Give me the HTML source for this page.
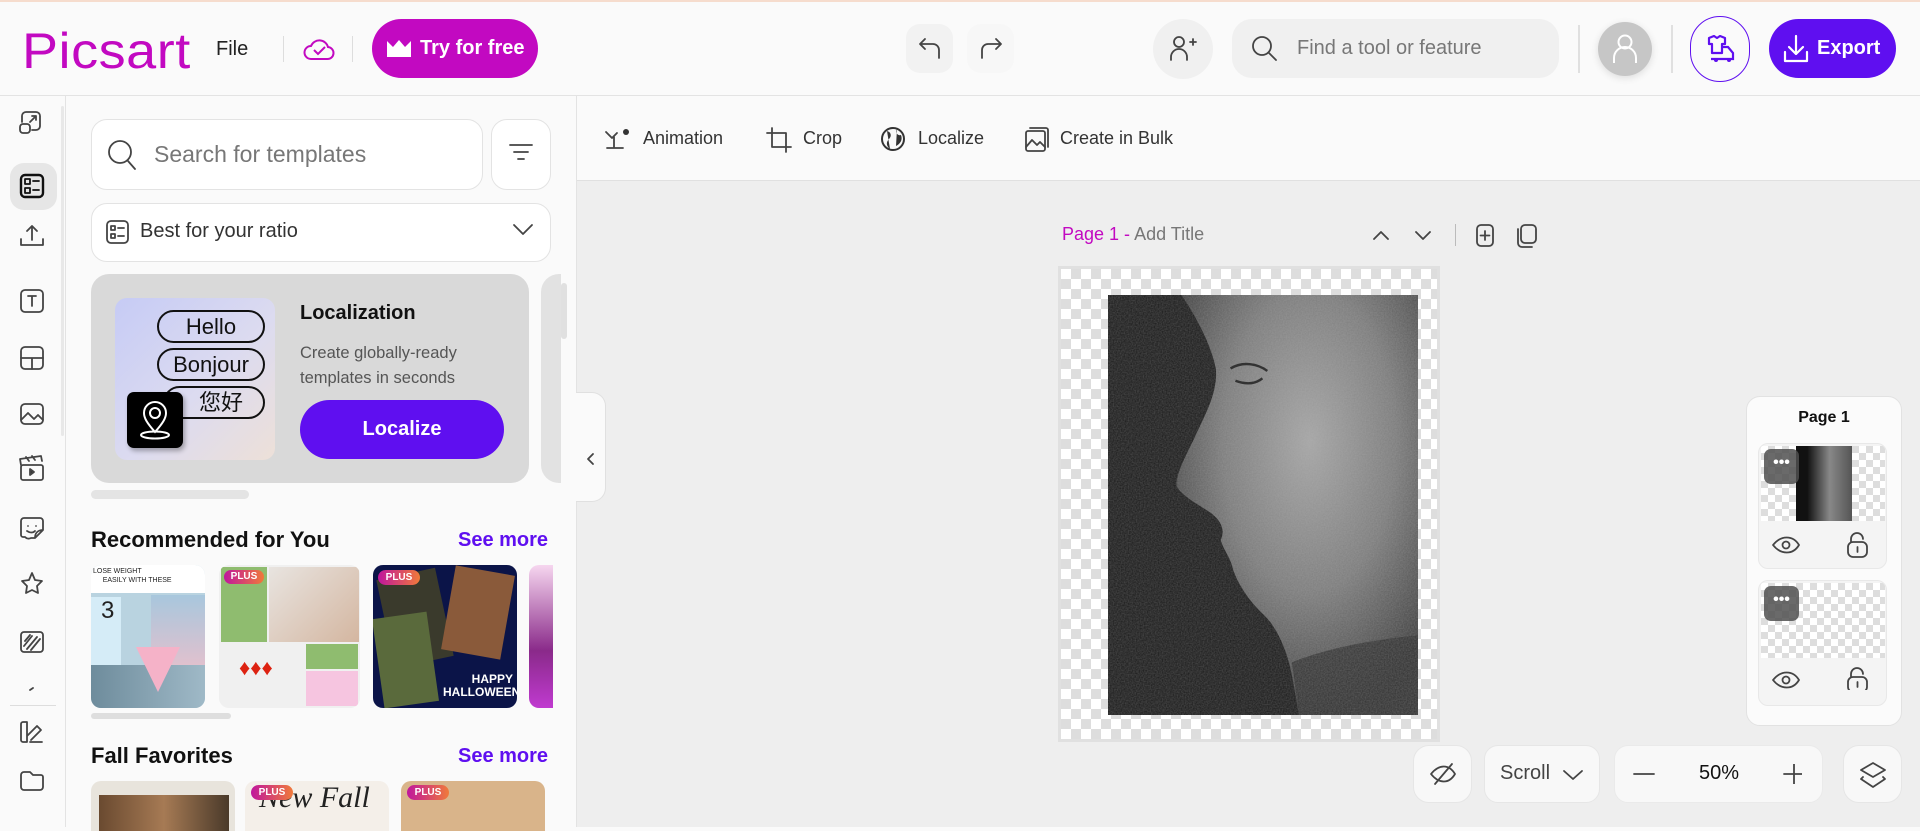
<!DOCTYPE html>
<html><head><meta charset="utf-8">
<style>
*{box-sizing:border-box;margin:0;padding:0}
body{width:1920px;height:827px;overflow:hidden;background:#fafafa;font-family:"Liberation Sans","Noto Sans CJK SC",sans-serif;color:#222;position:relative}
.a{position:absolute}
svg{display:block}
.ic{fill:none;stroke:#444;stroke-width:1.8;stroke-linecap:round;stroke-linejoin:round}
.btn{background:#f7f7f7;border:1px solid #e6e6e6;border-radius:14px}
.chk{background-color:#fff;background-image:linear-gradient(45deg,#ddd 25%,transparent 25%,transparent 75%,#ddd 75%),linear-gradient(45deg,#ddd 25%,transparent 25%,transparent 75%,#ddd 75%);background-size:20px 20px;background-position:0 0,10px 10px}
.chk2{background-size:14px 14px;background-position:0 0,7px 7px}
</style></head><body>
<div class="a" style="left:0;top:0;width:1920px;height:2px;background:#f6dccd"></div>
<!-- header -->
<div class="a" style="left:0;top:95px;width:1920px;height:1px;background:#e3e3e3"></div>
<div class="a" style="left:22px;top:22px;font-size:50px;font-weight:400;color:#c209c1;letter-spacing:0.5px;transform:scaleX(1.08);transform-origin:left">Picsart</div>
<div class="a" style="left:216px;top:38px;font-size:20px;color:#222">File</div>
<div class="a" style="left:283px;top:36px;width:1px;height:26px;background:#ddd"></div>
<svg class="a" style="left:302px;top:34px" width="34" height="30" viewBox="0 0 34 30"><path d="M9 25h16a6 6 0 0 0 1-12 9 9 0 0 0-17-1 6.5 6.5 0 0 0 0 13z" fill="none" stroke="#c209c1" stroke-width="2"/><path d="M12 16l4 4 7-7" fill="none" stroke="#c209c1" stroke-width="2"/></svg>
<div class="a" style="left:352px;top:36px;width:1px;height:26px;background:#ddd"></div>
<div class="a" style="left:372px;top:19px;width:166px;height:59px;border-radius:30px;background:#c209c1;color:#fff;font-size:20px;font-weight:700;line-height:59px;padding-left:48px">Try for free</div>
<svg class="a" style="left:386px;top:39px" width="26" height="20" viewBox="0 0 26 20"><path d="M1 2l6 6 6-7 6 7 6-6v16H1z" fill="#fff"/></svg>
<div class="a" style="left:906px;top:24px;width:47px;height:49px;border-radius:14px;background:#f2f2f2"></div>
<svg class="a" style="left:917px;top:36px" width="26" height="24" viewBox="0 0 26 24"><path d="M8 3L3 8l5 5M3 8h13a6 6 0 0 1 6 6v8" class="ic" stroke="#333"/></svg>
<div class="a" style="left:967px;top:24px;width:47px;height:49px;border-radius:14px;background:#f7f7f7"></div>
<svg class="a" style="left:978px;top:36px" width="26" height="24" viewBox="0 0 26 24"><path d="M18 3l5 5-5 5M23 8H10a6 6 0 0 0-6 6v8" class="ic" stroke="#bbb"/></svg>
<div class="a" style="left:1153px;top:19px;width:60px;height:60px;border-radius:30px;background:#f0f0f0"></div>
<svg class="a" style="left:1168px;top:33px" width="30" height="30" viewBox="0 0 30 30"><circle cx="11" cy="9" r="5" class="ic" stroke="#222"/><path d="M3 27v-3a8 8 0 0 1 16 0v3M22 9h6M25 6v6" class="ic" stroke="#222"/></svg>
<div class="a" style="left:1232px;top:19px;width:327px;height:59px;border-radius:20px;background:#f0f0f0"></div>
<svg class="a" style="left:1250px;top:34px" width="30" height="30" viewBox="0 0 30 30"><circle cx="12" cy="12" r="9" class="ic" stroke="#333"/><path d="M19 19l7 7" class="ic" stroke="#333"/></svg>
<div class="a" style="left:1297px;top:37px;font-size:20px;color:#777">Find a tool or feature</div>
<div class="a" style="left:1578px;top:25px;width:2px;height:48px;background:#e0e0e0"></div>
<div class="a" style="left:1598px;top:22px;width:54px;height:54px;border-radius:27px;background:#c6c6c6;box-shadow:0 2px 8px rgba(0,0,0,.12)"></div>
<svg class="a" style="left:1611px;top:32px" width="28" height="32" viewBox="0 0 28 32"><circle cx="14" cy="10" r="6.5" fill="none" stroke="#fff" stroke-width="2"/><path d="M3 31v-5a11 11 0 0 1 22 0v5" fill="none" stroke="#fff" stroke-width="2"/></svg>
<div class="a" style="left:1671px;top:25px;width:2px;height:48px;background:#e0e0e0"></div>
<div class="a" style="left:1690px;top:16px;width:60px;height:66px;border-radius:30px;border:1.5px solid #5f0ff0"></div>
<svg class="a" style="left:1705px;top:35px" width="32" height="28" viewBox="0 0 32 28"><path d="M4 3l5-2 3 2 3-2 5 2v6h-3v9H7V9H4z" fill="none" stroke="#5f0ff0" stroke-width="2.2" stroke-linejoin="round"/><path d="M17 12h6l5 6v6H6" fill="none" stroke="#5f0ff0" stroke-width="2.2"/><circle cx="11" cy="25" r="2" fill="#5f0ff0"/><circle cx="24" cy="25" r="2" fill="#5f0ff0"/></svg>
<div class="a" style="left:1769px;top:19px;width:127px;height:59px;border-radius:30px;background:#5f0ff0;color:#fff;font-size:20px;font-weight:700;line-height:59px;padding-left:48px">Export</div>
<svg class="a" style="left:1782px;top:34px" width="28" height="30" viewBox="0 0 28 30"><path d="M14 2v18M7 13l7 7 7-7M3 18v9h22v-9" fill="none" stroke="#fff" stroke-width="2.2" stroke-linecap="round" stroke-linejoin="round"/></svg>

<!-- left rail -->
<div class="a" style="left:65px;top:96px;width:1px;height:731px;background:#e3e3e3"></div>
<div class="a" style="left:10px;top:163px;width:47px;height:47px;border-radius:14px;background:#e6e6e6"></div>
<svg class="a" style="left:0;top:96px" width="65" height="731" viewBox="0 0 65 731">
<g class="ic" stroke="#333">
<path d="M22 26v-6a4 4 0 0 1 4-4h10a4 4 0 0 1 4 4v10a4 4 0 0 1-4 4h-4"/><rect x="20" y="28" width="10" height="9" rx="3"/><path d="M30 26l6-6M32 20h4v4"/>
<rect x="21" y="79" width="22" height="22" rx="4" stroke-width="2.4" stroke="#111"/><rect x="25" y="83" width="5" height="5" stroke="#111"/><rect x="25" y="92" width="5" height="5" stroke="#111"/><path d="M33 85h6M33 94h6" stroke="#111"/>
<path d="M21 143v6h22v-6M32 130v14M27 135l5-5 5 5"/>
<rect x="21" y="194" width="22" height="22" rx="4"/><path d="M28 200h8M32 200v10"/>
<rect x="21" y="251" width="22" height="22" rx="4"/><path d="M21 262h22M32 262v11"/>
<rect x="21" y="308" width="22" height="20" rx="4"/><path d="M21 324l7-7 6 6 4-4 5 5"/>
<rect x="21" y="369" width="22" height="15" rx="2"/><path d="M21 369l-1-6 21-3 1 5M26 361l3 4M32 360l3 4"/><path d="M30 373l4 3-4 3z" fill="#333"/>
<path d="M25 441h-2a2 2 0 0 1-2-2v-14a3 3 0 0 1 3-3h16a3 3 0 0 1 3 3v9l-8 8h-4a5 5 0 0 1-6-1zM35 442c0-5 3-8 8-8M28 430h.01M36 430h.01M27 435c3 2 6 2 8 0"/>
<path d="M32 477l3 7 7 1-5 5 1 7-6-3-6 3 1-7-5-5 7-1z"/>
<rect x="21" y="536" width="22" height="20" rx="3"/><path d="M24 550l8-10M27 553l10-12M31 554l9-11M25 545l5-6"/>
<path d="M30 594l3-2"/>
</g>
<rect x="10" y="609" width="46" height="1" fill="#ddd"/>
<g class="ic" stroke="#333"><path d="M21 644v-16a2 2 0 0 1 2-2h4v20h-4a2 2 0 0 1-2-2zM27 640l10-10 4 4-10 10M30 646h12"/><path d="M21 689v-10a3 3 0 0 1 3-3h6l3 3h8a2 2 0 0 1 2 2v10a3 3 0 0 1-3 3H24a3 3 0 0 1-3-3z"/></g>
<rect x="61" y="10" width="3" height="330" rx="1.5" fill="#e8e8e8"/>
</svg>

<!-- panel -->
<div class="a" style="left:576px;top:96px;width:1px;height:731px;background:#e3e3e3"></div>
<div class="a" style="left:91px;top:119px;width:392px;height:71px;border:1px solid #e3e3e3;border-radius:16px;background:#fff"></div>
<svg class="a" style="left:105px;top:137px" width="36" height="36" viewBox="0 0 36 36"><circle cx="15" cy="15" r="11" class="ic" stroke="#333" stroke-width="2"/><path d="M23 24l7 8" class="ic" stroke="#333" stroke-width="2"/></svg>
<div class="a" style="left:154px;top:141px;font-size:23px;color:#777">Search for templates</div>
<div class="a" style="left:491px;top:119px;width:60px;height:71px;border:1px solid #e3e3e3;border-radius:16px;background:#fff"></div>
<svg class="a" style="left:508px;top:140px" width="26" height="26" viewBox="0 0 26 26"><path d="M2 5h22M6 12h14M10 19h6" class="ic" stroke="#444"/></svg>
<div class="a" style="left:91px;top:203px;width:460px;height:59px;border:1px solid #e3e3e3;border-radius:16px;background:#fff"></div>
<svg class="a" style="left:105px;top:219px" width="26" height="26" viewBox="0 0 26 26"><rect x="2" y="2" width="21" height="22" rx="4" class="ic" stroke="#444"/><rect x="6" y="7" width="4" height="4" class="ic" stroke="#444" stroke-width="1.4"/><rect x="6" y="15" width="4" height="4" class="ic" stroke="#444" stroke-width="1.4"/><path d="M13 9h6M13 17h6" class="ic" stroke="#444"/></svg>
<div class="a" style="left:140px;top:220px;font-size:20px;color:#333">Best for your ratio</div>
<svg class="a" style="left:512px;top:222px" width="22" height="16" viewBox="0 0 22 16"><path d="M2 3l9 9 9-9" class="ic" stroke="#444" stroke-width="2"/></svg>
<!-- card -->
<div class="a" style="left:91px;top:274px;width:438px;height:209px;border-radius:18px;background:#d9d9d9"></div>
<div class="a" style="left:541px;top:274px;width:20px;height:209px;border-radius:18px 0 0 18px;background:#e2e2e2"></div>
<div class="a" style="left:115px;top:298px;width:160px;height:162px;border-radius:12px;background:linear-gradient(135deg,#c6cbf5,#dcdbf0 55%,#ede0d8)"></div>
<div class="a" style="left:157px;top:310px;width:108px;height:33px;border:2px solid #111;border-radius:17px;text-align:center;font-size:22px;line-height:29px;color:#111">Hello</div>
<div class="a" style="left:157px;top:348px;width:108px;height:33px;border:2px solid #111;border-radius:17px;text-align:center;font-size:22px;line-height:29px;color:#111">Bonjour</div>
<div class="a" style="left:163px;top:386px;width:102px;height:33px;border:2px solid #111;border-radius:17px;text-align:center;font-size:22px;line-height:29px;color:#111;padding-left:14px">您好</div>
<div class="a" style="left:127px;top:392px;width:56px;height:56px;border-radius:7px;background:#000;box-shadow:2px 3px 5px rgba(0,0,0,.3)"></div>
<svg class="a" style="left:137px;top:399px" width="36" height="44" viewBox="0 0 36 44"><path d="M18 33C10 24 7 19 7 14a11 11 0 0 1 22 0c0 5-3 10-11 19z" fill="none" stroke="#fff" stroke-width="2"/><circle cx="18" cy="14" r="5" fill="none" stroke="#fff" stroke-width="2"/><ellipse cx="18" cy="36" rx="14" ry="3.5" fill="none" stroke="#fff" stroke-width="2"/></svg>
<div class="a" style="left:300px;top:302px;font-size:20px;font-weight:700;color:#111">Localization</div>
<div class="a" style="left:300px;top:341px;font-size:16.5px;line-height:24.5px;color:#555">Create globally-ready<br>templates in seconds</div>
<div class="a" style="left:300px;top:400px;width:204px;height:59px;border-radius:30px;background:#5f0ff0;color:#fff;font-size:20px;font-weight:700;text-align:center;line-height:59px">Localize</div>
<div class="a" style="left:91px;top:490px;width:158px;height:9px;border-radius:5px;background:#e4e4e4"></div>
<div class="a" style="left:561px;top:283px;width:6px;height:56px;border-radius:3px;background:#e0e0e0"></div>
<div class="a" style="left:91px;top:527px;font-size:22px;font-weight:700;color:#111">Recommended for You</div>
<div class="a" style="left:458px;top:529px;font-size:20px;font-weight:700;color:#5f0ff0">See more</div>
<!-- thumbs -->
<div class="a" style="left:91px;top:565px;width:114px;height:143px;border-radius:10px;overflow:hidden;background:#b9d3e0">
 <div class="a" style="left:0;top:0;width:114px;height:28px;background:#fff;font-size:7px;line-height:9px;padding:2px">LOSE WEIGHT<br>&nbsp;&nbsp;&nbsp;&nbsp;&nbsp;EASILY WITH THESE</div>
 <div class="a" style="left:0;top:32px;width:30px;height:80px;background:#d5ecf7;font-size:24px;padding-left:10px">3</div>
 <div class="a" style="left:60px;top:30px;width:54px;height:80px;background:linear-gradient(#a8c7dd,#e8c0cc)"></div>
 <div class="a" style="left:0;top:100px;width:114px;height:43px;background:linear-gradient(90deg,#6e8c9c,#9fb9c7)"></div>
 <div class="a" style="left:45px;top:82px;width:0;height:0;border-left:22px solid transparent;border-right:22px solid transparent;border-top:45px solid #f5b2c8"></div>
</div>
<div class="a" style="left:219px;top:565px;width:141px;height:143px;border-radius:10px;overflow:hidden;background:#f0f0f0">
 <div class="a" style="left:2px;top:2px;width:46px;height:75px;background:#8fbc6f"></div>
 <div class="a" style="left:50px;top:2px;width:90px;height:75px;background:linear-gradient(135deg,#e8e4e0,#d4b6a0)"></div>
 <div class="a" style="left:5px;top:5px;width:40px;height:14px;border-radius:7px;background:linear-gradient(90deg,#c0169d,#f07a3a);color:#fff;font-size:10px;font-weight:700;text-align:center;line-height:14px">PLUS</div>
 <div class="a" style="left:20px;top:90px;width:60px;height:40px;color:#d21;font-size:22px">♦♦♦</div>
 <div class="a" style="left:87px;top:79px;width:52px;height:25px;background:#8fbc6f"></div>
 <div class="a" style="left:87px;top:106px;width:52px;height:35px;background:#f6c5e0"></div>
</div>
<div class="a" style="left:373px;top:565px;width:144px;height:143px;border-radius:10px;overflow:hidden;background:#0b1448">
 <div class="a" style="left:12px;top:8px;width:60px;height:90px;background:#3a3a2c;transform:rotate(-12deg)"></div>
 <div class="a" style="left:75px;top:5px;width:60px;height:85px;background:#8a5a3a;transform:rotate(10deg)"></div>
 <div class="a" style="left:5px;top:50px;width:55px;height:90px;background:#5a6a3c;transform:rotate(-8deg)"></div>
 <div class="a" style="left:5px;top:5px;width:42px;height:15px;border-radius:8px;background:linear-gradient(90deg,#c0169d,#f07a3a);color:#fff;font-size:10px;font-weight:700;text-align:center;line-height:15px">PLUS</div>
 <div class="a" style="left:70px;top:108px;color:#fff;font-size:12px;font-weight:700;line-height:13px;text-align:right;width:70px">HAPPY<br>HALLOWEEN</div>
</div>
<div class="a" style="left:529px;top:565px;width:24px;height:143px;border-radius:10px 0 0 10px;background:linear-gradient(#f6d6ef,#8a2a8a 60%,#c03ad0)"></div>
<div class="a" style="left:91px;top:713px;width:140px;height:6px;border-radius:3px;background:#dedede"></div>
<div class="a" style="left:91px;top:743px;font-size:22px;font-weight:700;color:#111">Fall Favorites</div>
<div class="a" style="left:458px;top:745px;font-size:20px;font-weight:700;color:#5f0ff0">See more</div>
<div class="a" style="left:91px;top:781px;width:144px;height:50px;border-radius:10px 10px 0 0;background:#e8e4dc;overflow:hidden"><div class="a" style="left:8px;top:14px;width:130px;height:40px;background:linear-gradient(90deg,#6a4a30,#a67a54,#4a3a2a)"></div></div>
<div class="a" style="left:245px;top:781px;width:144px;height:50px;border-radius:10px 10px 0 0;background:#f4efe9;overflow:hidden;font-family:'Liberation Serif',serif;font-style:italic;font-size:30px;color:#222;padding-left:14px">New Fall<div class="a" style="left:6px;top:4px;width:42px;height:15px;border-radius:8px;background:linear-gradient(90deg,#c0169d,#f07a3a);color:#fff;font:bold 10px 'Liberation Sans';text-align:center;line-height:15px">PLUS</div></div>
<div class="a" style="left:401px;top:781px;width:144px;height:50px;border-radius:10px 10px 0 0;background:#d9b48a;overflow:hidden"><div class="a" style="left:6px;top:4px;width:42px;height:15px;border-radius:8px;background:linear-gradient(90deg,#c0169d,#f07a3a);color:#fff;font:bold 10px 'Liberation Sans';text-align:center;line-height:15px">PLUS</div></div>

<!-- canvas area -->
<div class="a" style="left:577px;top:96px;width:1343px;height:84px;background:#fafafa"></div>
<div class="a" style="left:577px;top:180px;width:1343px;height:1px;background:#e0e0e0"></div>
<div class="a" style="left:577px;top:181px;width:1343px;height:646px;background:#eeeeee"></div>
<svg class="a" style="left:604px;top:126px" width="28" height="26" viewBox="0 0 28 26"><path d="M2 6l6 6 5-5M10 11v10M3 22h16" class="ic" stroke="#333"/><circle cx="22" cy="6" r="3" fill="#333"/></svg>
<div class="a" style="left:643px;top:128px;font-size:18px;color:#333">Animation</div>
<svg class="a" style="left:765px;top:126px" width="28" height="28" viewBox="0 0 28 28"><path d="M7 2v19h19M2 7h19v19" class="ic" stroke="#333"/></svg>
<div class="a" style="left:803px;top:128px;font-size:18px;color:#333">Crop</div>
<svg class="a" style="left:880px;top:126px" width="26" height="26" viewBox="0 0 26 26"><circle cx="13" cy="13" r="11" fill="none" stroke="#333" stroke-width="2"/><path d="M7 5c4 1 5 5 2 8s-3 7 1 10M17 3c-2 4 1 7 4 6 2 5-1 9-5 11" fill="#333"/></svg>
<div class="a" style="left:918px;top:128px;font-size:18px;color:#333">Localize</div>
<svg class="a" style="left:1023px;top:125px" width="28" height="28" viewBox="0 0 28 28"><rect x="3" y="6" width="19" height="20" rx="2" class="ic" stroke="#333"/><path d="M7 3h16a2 2 0 0 1 2 2v17M3 22l6-7 5 5 3-3 5 5" class="ic" stroke="#333"/></svg>
<div class="a" style="left:1060px;top:128px;font-size:18px;color:#333">Create in Bulk</div>
<!-- collapse tab -->
<div class="a" style="left:576px;top:392px;width:30px;height:110px;background:#fafafa;border:1px solid #e0e0e0;border-left:none;border-radius:0 14px 14px 0"></div>
<svg class="a" style="left:585px;top:452px" width="12" height="14" viewBox="0 0 12 14"><path d="M8 2L3 7l5 5" class="ic" stroke="#333"/></svg>
<!-- page title -->
<div class="a" style="left:1062px;top:224px;font-size:18px;color:#c209c1">Page 1 - <span style="color:#777">Add Title</span></div>
<svg class="a" style="left:1370px;top:225px" width="70" height="20" viewBox="0 0 70 20"><path d="M4 14l7-7 7 7M46 7l7 7 7-7" class="ic" stroke="#aaa"/></svg>
<div class="a" style="left:1455px;top:224px;width:1px;height:22px;background:#bbb"></div>
<svg class="a" style="left:1474px;top:223px" width="70" height="26" viewBox="0 0 70 26"><rect x="3" y="2" width="16" height="21" rx="4" class="ic" stroke="#444"/><path d="M11 8v9M6.5 12.5h9" class="ic" stroke="#444"/><rect x="47" y="2" width="15" height="18" rx="4" class="ic" stroke="#444"/><path d="M44 6v14a4 4 0 0 0 4 4h10" class="ic" stroke="#444"/></svg>
<!-- artboard -->
<div class="a chk" style="left:1058px;top:266px;width:382px;height:476px;border:3px solid #e0e0e0"></div>
<svg class="a" style="left:1108px;top:295px" width="310" height="420" viewBox="0 0 253 343" preserveAspectRatio="none">
<defs><radialGradient id="g" cx="0.55" cy="0.35" r="0.65"><stop offset="0" stop-color="#a5a5a5"/><stop offset="0.55" stop-color="#7a7a7a"/><stop offset="1" stop-color="#3a3a3a"/></radialGradient>
<filter id="n"><feTurbulence type="fractalNoise" baseFrequency="0.9" numOctaves="1"/><feColorMatrix values="0 0 0 0 0.5  0 0 0 0 0.5  0 0 0 0 0.5  0 0 0 0.35 0"/><feComposite in2="SourceGraphic" operator="in"/></filter></defs>
<rect width="253" height="343" fill="#151515"/>
<path d="M60 0C72 18 84 40 88 60C90 80 78 100 70 118C62 134 55 148 56 156C60 164 72 170 84 178C92 184 96 192 92 200C94 208 100 214 102 224C106 236 115 250 128 262C138 272 146 290 150 310L156 343H253V0Z" fill="url(#g)"/>
<path d="M150 300C175 290 210 282 253 278V343H156Z" fill="#2a2a2a" opacity=".8"/>
<rect width="253" height="343" fill="#fff" filter="url(#n)"/>
<path d="M100 60c10-6 22-4 30 2M104 70c8 3 16 3 22-2" stroke="#333" stroke-width="2" fill="none"/>
</svg>
<!-- right panel -->
<div class="a" style="left:1746px;top:396px;width:156px;height:330px;border-radius:14px;background:#fbfbfb;border:1px solid #e2e2e2"></div>
<div class="a" style="left:1746px;top:409px;width:156px;text-align:center;font-size:16px;font-weight:700;color:#111">Page 1</div>
<div class="a" style="left:1758px;top:443px;width:129px;height:126px;border-radius:10px;background:#f4f4f4;border:1px solid #e8e8e8;overflow:hidden">
 <div class="a chk chk2" style="left:2px;top:2px;width:124px;height:75px"></div>
 <div class="a" style="left:37px;top:2px;width:56px;height:75px;background:linear-gradient(90deg,#111 20%,#888 60%,#555)"></div>
 <div class="a" style="left:5px;top:5px;width:35px;height:35px;border-radius:7px;background:rgba(80,80,80,.85);color:#fff;font-size:16px;text-align:center;line-height:28px;font-weight:700">•••</div>
</div>
<div class="a" style="left:1758px;top:580px;width:129px;height:126px;border-radius:10px;background:#f4f4f4;border:1px solid #e8e8e8;overflow:hidden">
 <div class="a chk chk2" style="left:2px;top:2px;width:124px;height:75px"></div>
 <div class="a" style="left:5px;top:5px;width:35px;height:35px;border-radius:7px;background:rgba(80,80,80,.85);color:#fff;font-size:16px;text-align:center;line-height:28px;font-weight:700">•••</div>
</div>
<svg class="a" style="left:1770px;top:530px" width="110" height="160" viewBox="0 0 110 160">
<g class="ic" stroke="#555"><path d="M3 15c8-10 20-10 26 0c-6 10-18 10-26 0z"/><circle cx="16" cy="15" r="3.5"/><rect x="78" y="12" width="19" height="15" rx="5"/><path d="M81 12v-3a6 6 0 0 1 12 0M87.5 17v5"/>
<path d="M3 150c8-10 20-10 26 0c-6 10-18 10-26 0z"/><circle cx="16" cy="150" r="3.5"/><rect x="78" y="147" width="19" height="15" rx="5"/><path d="M81 147v-3a6 6 0 0 1 12 0M87.5 152v5"/></g></svg>
<!-- bottom controls -->
<div class="a" style="left:1413px;top:745px;width:59px;height:58px;border-radius:16px;background:#f8f8f8;border:1px solid #e6e6e6"></div>
<svg class="a" style="left:1428px;top:760px" width="30" height="28" viewBox="0 0 30 28"><path d="M3 14c8-10 18-10 24 0c-6 10-16 10-24 0zM7 24L24 4" class="ic" stroke="#555"/></svg>
<div class="a" style="left:1484px;top:745px;width:116px;height:58px;border-radius:14px;background:#f8f8f8;border:1px solid #e6e6e6"></div>
<div class="a" style="left:1500px;top:762px;font-size:20px;color:#444">Scroll</div>
<svg class="a" style="left:1562px;top:768px" width="22" height="14" viewBox="0 0 22 14"><path d="M2 3l9 8 9-8" class="ic" stroke="#444"/></svg>
<div class="a" style="left:1614px;top:745px;width:209px;height:58px;border-radius:14px;background:#f8f8f8;border:1px solid #eaeaea"></div>
<svg class="a" style="left:1632px;top:764px" width="170" height="20" viewBox="0 0 170 20"><path d="M2 10h20M152 10h20M162 0v20" class="ic" stroke="#444"/></svg>
<div class="a" style="left:1699px;top:762px;font-size:20px;color:#111">50%</div>
<div class="a" style="left:1843px;top:745px;width:59px;height:58px;border-radius:16px;background:#f8f8f8;border:1px solid #e6e6e6"></div>
<svg class="a" style="left:1858px;top:760px" width="30" height="30" viewBox="0 0 30 30"><path d="M15 3l12 7-12 7-12-7zM5 17l-2 2 12 8 12-8-2-2" class="ic" stroke="#444"/></svg>
</body></html>
